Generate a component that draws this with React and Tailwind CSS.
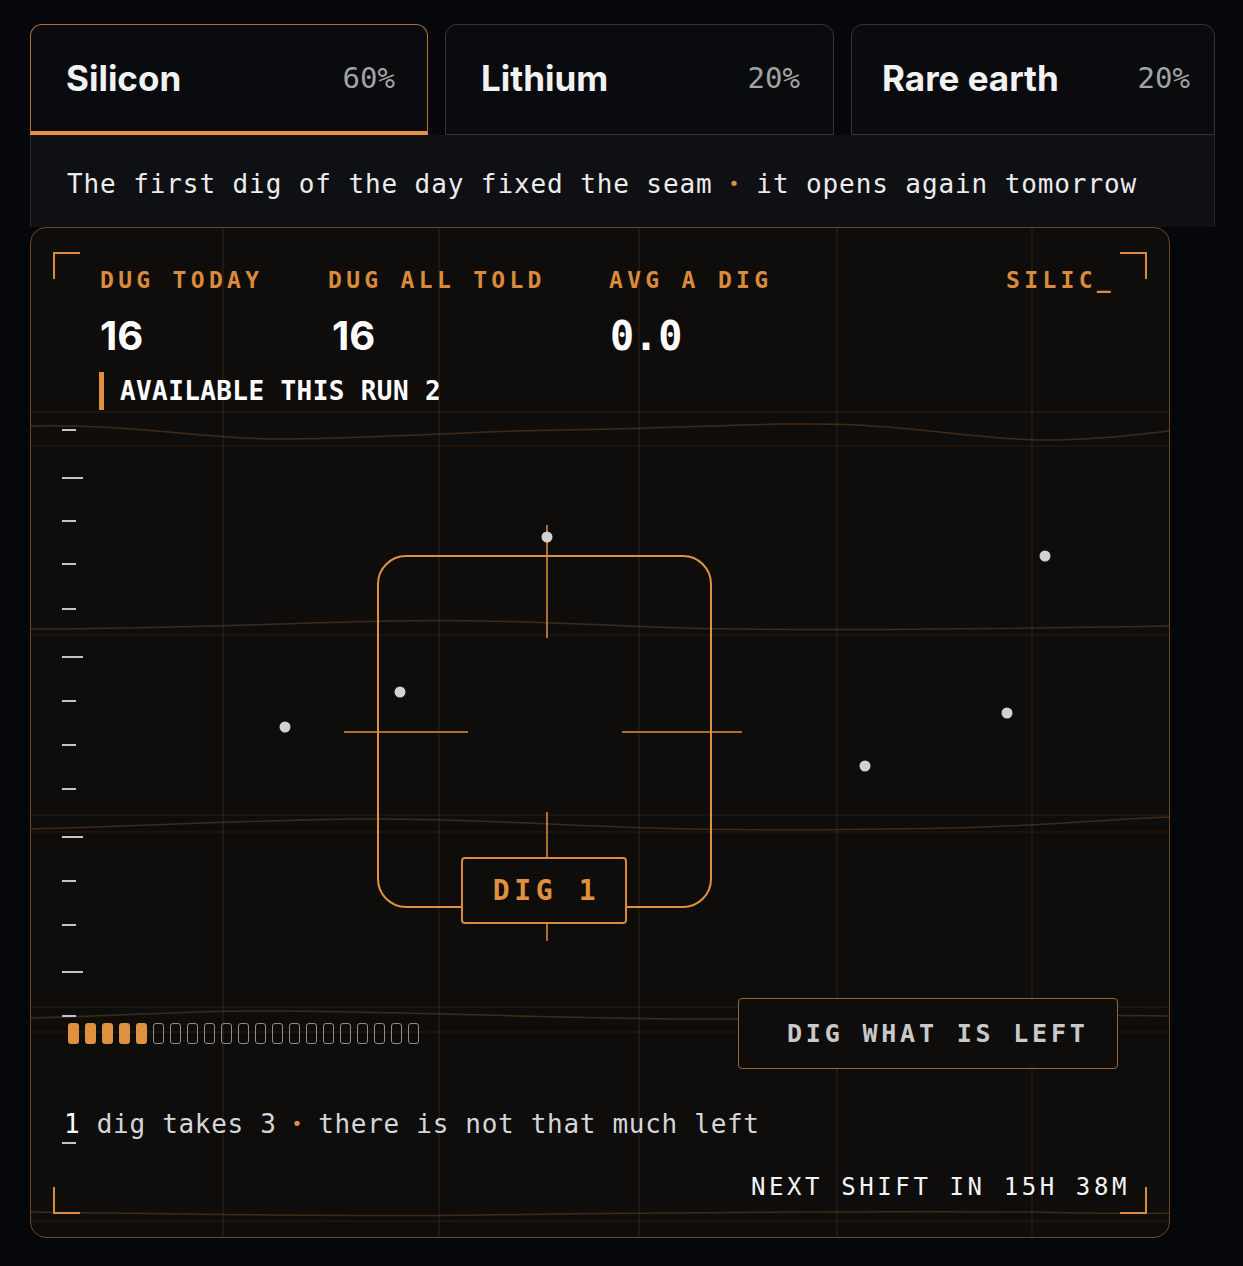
import React from 'react';

const mono = "font-['DejaVu_Sans_Mono',monospace]";
const sans = "font-['Inter',sans-serif]";

const tabs = [
  { name: 'Silicon', pct: '60%', active: true, box: 'w-[398px] pl-[35px] pr-[32px]' },
  { name: 'Lithium', pct: '20%', box: 'w-[389px] pl-[35px] pr-[33px]' },
  { name: 'Rare earth', pct: '20%', box: 'w-[364px] pl-[30px] pr-[24px]' },
];

// panel-local coordinates (inner box is 1138 x 1009)
const vLines = [192, 408, 608, 806, 1001];
const hLines = [184, 218, 407, 587, 604, 779, 804, 993];
const waves = [
  { y: 198, d: 'M0,0 C110,-2 170,14 260,13 C360,12 440,5 530,4 C650,3 740,-5 825,-1 C905,3 955,14 1015,14 C1070,14 1110,8 1138,5' },
  { y: 393, d: 'M0,8 C150,8 250,2 360,0 C470,-2 560,4 650,7 C760,10 900,9 1138,5' },
  { y: 589, d: 'M0,12 C120,9 220,3 330,2 C430,1 520,8 620,11 C720,14 820,13 920,11 C1010,9 1080,2 1138,0' },
  { y: 782, d: 'M0,8 C100,6 150,0 250,1 C400,2 560,10 700,9 C850,8 1000,4 1138,6' },
  { y: 981, d: 'M0,3 C150,5 300,8 450,6 C600,4 800,2 1000,3 C1060,4 1100,5 1138,4' },
];
const ticks = [
  [202, false], [250, true], [293, false], [336, false], [381, false], [429, true],
  [473, false], [517, false], [561, false], [609, true], [653, false], [697, false],
  [744, true], [788, false], [915, false],
];
const dots = [[516, 309], [369, 464], [254, 499], [834, 538], [976, 485], [1014, 328]];

const Backdrop = () => (
  <svg className="absolute inset-0" width="1138" height="1009" viewBox="0 0 1138 1009" fill="none">
    {vLines.map((x) => (
      <line key={x} x1={x} y1="0" x2={x} y2="1009" stroke="#d88c3c" strokeOpacity="0.17" />
    ))}
    {hLines.map((y) => (
      <line key={y} x1="0" y1={y} x2="1138" y2={y} stroke="#d88c3c" strokeOpacity="0.13" />
    ))}
    {waves.map((w) => (
      <path key={w.y} d={w.d} transform={`translate(0 ${w.y})`} stroke="#d88c3c" strokeOpacity="0.24" strokeWidth="1.5" />
    ))}
    {ticks.map(([y, long]) => (
      <line key={y} x1="31" y1={y} x2={long ? 52 : 45} y2={y} stroke="#c4c4c4" strokeWidth="2" />
    ))}

    {/* corner brackets */}
    <g stroke="#d88c3c" strokeWidth="2">
      <path d="M23,51 V25 H49" />
      <path d="M1089,25 H1115 V51" />
      <path d="M23,959 V985 H49" />
      <path d="M1089,985 H1115 V959" />
    </g>

    {/* target frame */}
    <g stroke="#e0913f">
      <rect x="347" y="328" width="333" height="351" rx="28" strokeWidth="2" />
      <line x1="516" y1="297" x2="516" y2="410" strokeWidth="1.5" />
      <line x1="516" y1="584" x2="516" y2="713" strokeWidth="1.5" />
      <line x1="313" y1="504" x2="437" y2="504" strokeWidth="1.5" />
      <line x1="591" y1="504" x2="711" y2="504" strokeWidth="1.5" />
    </g>

    {dots.map(([x, y]) => (
      <circle key={x} cx={x} cy={y} r="5.5" fill="#d2d2d2" />
    ))}
  </svg>
);

const App = () => {
  return (
    <div className="h-[1266px] overflow-hidden bg-[#05070a] pt-[24px] pl-[30px]">
      <div className="w-[1185px]">
        {/* Tabs */}
        <div className="flex gap-[17px]">
          {tabs.map((t) => (
            <div
              key={t.name}
              className={`${t.box} h-[111px] flex items-center justify-between rounded-t-[12px] bg-[#0a0b0e] ${
                t.active ? 'border border-[#b07437] border-b-4 border-b-[#e5943f]' : 'border border-[#33353a] pb-[3px]'
              }`}
            >
              <span className={`${sans} text-[35px] font-bold leading-none text-[#f2f2f2]`}>{t.name}</span>
              <span className={`${mono} text-[29px] leading-none text-[#a3a3a3]`}>{t.pct}</span>
            </div>
          ))}
        </div>

        {/* Notice */}
        <div className={`${mono} h-[92px] flex items-center pl-[36px] pt-[6px] bg-[#0e1014] border-x border-[#26282c] text-[26px] tracking-[0.9px] leading-none text-[#ececec]`}>
          The first dig of the day fixed the seam <span className="text-[#e0913f] mx-[16px] text-[18px]">•</span> it opens again tomorrow
        </div>
      </div>

      {/* Main panel */}
      <div className={`${mono} relative w-[1140px] h-[1011px] flex flex-col rounded-[16px] overflow-hidden border border-[#6b4624] bg-[#0f0d0c]`}>
        <Backdrop />

        <div className="relative flex items-center h-[28px] mt-[38px] pl-[69px] pr-[54px] text-[23px] font-bold tracking-[4.3px] leading-none text-[#d98b3b]">
          <span className="w-[228px]">DUG TODAY</span>
          <span className="w-[281px]">DUG ALL TOLD</span>
          <span>AVG A DIG</span>
          <span className="ml-auto">SILIC_</span>
        </div>

        <div className="relative flex items-center h-[44px] mt-[20px] pl-[69px] leading-none text-white">
          <span className={`${sans} w-[232px] text-[40px] font-bold`}>16</span>
          <span className={`${sans} w-[278px] text-[40px] font-bold`}>16</span>
          <span className="text-[40px] font-bold">0.0</span>
        </div>

        <div className="relative flex items-center h-[38px] mt-[14px] pl-[68px]">
          <span className="w-[5px] h-[38px] bg-[#e0913f]" />
          <span className="ml-[16px] text-[26px] font-bold tracking-[0.4px] leading-none text-white">AVAILABLE THIS RUN 2</span>
        </div>

        {/* canvas */}
        <div className="relative h-[588px]">
          <button className="absolute left-[430px] top-[447px] w-[166px] h-[67px] flex items-center justify-center pl-[5px] rounded-[4px] border-2 border-[#d98b3b] bg-[#0f0d0c] text-[28px] font-bold tracking-[4.6px] leading-none text-[#e0913f]">
            DIG 1
          </button>
        </div>

        <div className="relative flex items-center justify-between h-[71px] pl-[37px] pr-[51px]">
          <div className="flex gap-[6px]">
            {Array.from({ length: 21 }).map((_, i) =>
              i < 5 ? (
                <span key={i} className="w-[11px] h-[21px] rounded-[3px] bg-[#e0913f]" />
              ) : (
                <span key={i} className="w-[11px] h-[21px] rounded-[3px] border-[1.5px] border-[#8e8e8e]" />
              )
            )}
          </div>
          <button className="w-[380px] h-[71px] flex items-center pl-[48px] rounded-[4px] border-[1.5px] border-[#9a6532] bg-[#0f0d0c] text-[25px] font-bold tracking-[3.8px] leading-none text-[#c9c9c9]">
            DIG WHAT IS LEFT
          </button>
        </div>

        <div className="relative flex items-center h-[32px] mt-[39px] pl-[33px] text-[26px] tracking-[0.7px] leading-none text-[#d6d6d6]">
          <span className="text-white">1</span>&nbsp;dig takes 3 <span className="text-[#e0913f] mx-[15px] text-[18px]">•</span> there is not that much left
        </div>

        <div className="relative flex items-center justify-end h-[28px] mt-[33px] pr-[39px] text-[24px] tracking-[3.6px] leading-none text-[#f4f4f4]">
          NEXT SHIFT IN 15H 38M
        </div>
      </div>
    </div>
  );
};

export default App;
